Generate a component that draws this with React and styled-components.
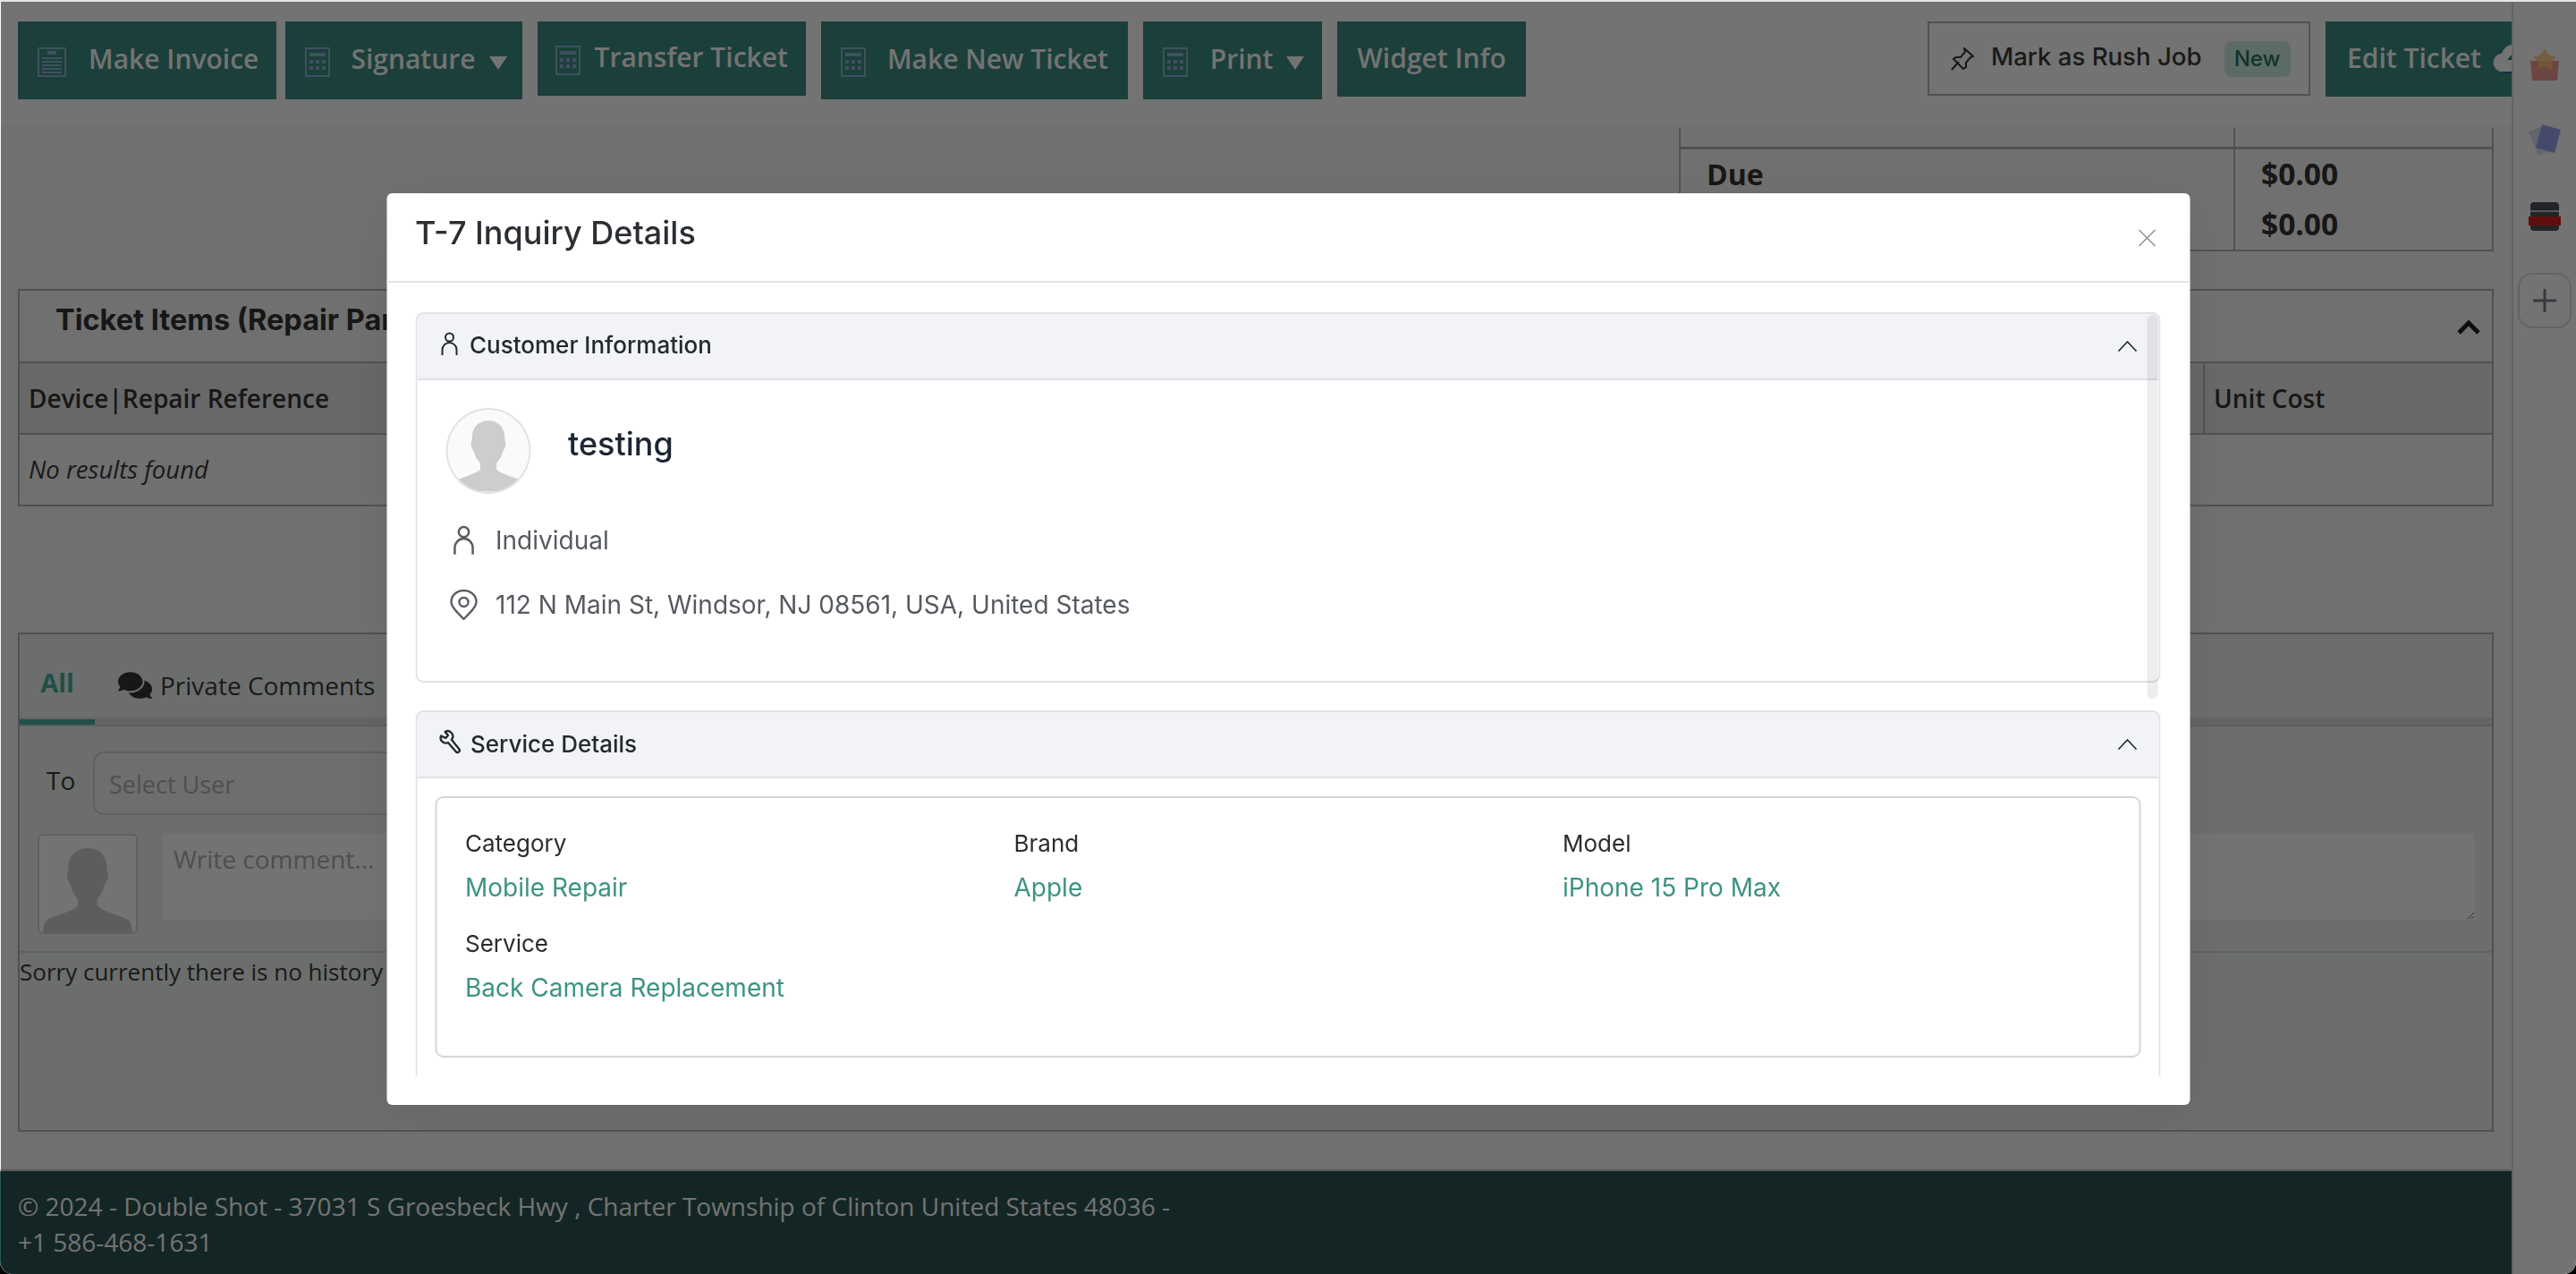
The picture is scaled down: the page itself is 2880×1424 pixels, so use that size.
import React from "react";
import styled, { createGlobalStyle } from "styled-components";
import { FaComments } from "react-icons/fa";

const Global = createGlobalStyle`
  html, body { margin: 0; padding: 0; background: #000; }
  body { font-family: "Open Sans", "Liberation Sans", sans-serif; color: #3a3a3a; }
  * { box-sizing: border-box; }
`;
const Shell = styled.div`
  display: grid; grid-template-columns: 2808px 72px; height: 1424px; overflow: hidden;
  background: #fff; border-top: 2px solid #e6e6e6; border-radius: 0 0 14px 14px;
`;
const Main = styled.div`display: flex; flex-direction: column; min-width: 0; height: 1422px;`;
const Toolbar = styled.div`
  display: flex; align-items: flex-start; gap: 17px; height: 139px; flex: none;
  padding: 22px 0 0 20px; overflow: hidden; background: #fff;
`;
const Group = styled.div`display: flex; align-items: flex-start; gap: 10px;`;
const ToolButton = styled.div`
  display: flex; align-items: center; flex: none;
  height: ${p => p.$h || 87}px; padding: ${p => p.$pad || "0 22px"};
  background: #3c8c82; color: #fff; font-weight: 600; font-size: 30px;
  white-space: nowrap;
`;
const ToolLabel = styled.span`margin-left: ${p => p.$ml || 0}px; margin-top: -4px;`;
const ToolIcon = styled.svg`flex: none; color: #8ab4d4; margin-top: 4px;`;
const Caret = styled.span`
  width: 0; height: 0; margin: 6px 0 0 15px;
  border-left: 10px solid transparent; border-right: 10px solid transparent; border-top: 15px solid #fff;
`;
const RushButton = styled.div`
  display: flex; align-items: center; flex: none; margin-left: auto; height: 83px; width: 428px;
  border: 2px solid #b4b4b4; padding: 0 0 0 24px; font-family: Inter, sans-serif; font-weight: 500;
  font-size: 27.6px; color: #3a3a3a; white-space: nowrap;
`;
const RushText = styled.span`margin-left: 19px; margin-top: -6px;`;
const NewBadge = styled.span`
  margin-left: 25px; width: 74px; height: 40px; border-radius: 8px; background: #cdeee0; color: #2f6f60;
  display: flex; align-items: center; justify-content: center; font-size: 24px; font-weight: 500;
`;
const EditButton = styled(ToolButton)`height: 84px; width: 300px; padding: 0 0 0 24px; margin-right: -92px;`;
const EditCloud = styled.svg`flex: none; margin-left: 12px;`;
const Content = styled.div`
  flex: 1; display: flex; flex-direction: column; padding: 2px 20px 0 20px; background: #f8f8f8; min-height: 0;
`;
const Totals = styled.div`
  align-self: flex-end; width: 911px; height: 138px; border: solid #b4b4b4; border-width: 0 2px 2px 2px;
  display: grid; grid-template-columns: 618px 1fr; grid-template-rows: 24px 1fr;
  font-weight: 700; font-size: 32px; color: #333;
`;
const TotalCell = styled.div`
  padding: ${p => p.$pad || "0"}; line-height: 55px;
  border-left: ${p => (p.$line ? "2px solid #b4b4b4" : "none")};
  border-bottom: ${p => (p.$head ? "3px solid #b4b4b4" : "none")};
`;
const Amounts = styled.div`font-size: 33.500px; line-height: 55.500px;`;
const ItemsCard = styled.div`margin-top: 42px; height: 243px; border: 2px solid #b4b4b4; display: flex; flex-direction: column;`;
const ItemsTitle = styled.div`
  height: 81px; flex: none; display: flex; align-items: center; justify-content: space-between; padding: 0 13px 14px 40px;
  font-family: Inter, sans-serif; font-weight: 700; font-size: 32.5px; color: #333; border-bottom: 2px solid #b4b4b4;
`;
const TitleChevron = styled.svg`flex: none; margin-top: 18px;`;
const ItemsHead = styled.div`
  height: 80px; flex: none; background: #e6e6e6; border-bottom: 2px solid #b4b4b4; display: flex; justify-content: space-between;
  font-weight: 600; font-size: 28px; color: #333;
`;
const HeadCell = styled.div`display: flex; align-items: center; padding: 0 10px;`;
const UnitCell = styled(HeadCell)`width: 323px; border-left: 2px solid #b4b4b4;`;
const NoResults = styled.div`flex: 1; display: flex; align-items: center; padding: 0 10px; font-style: italic; font-size: 27.5px; color: #3a3a3a;`;
const CommentCard = styled.div`
  margin-top: 141px; height: 559px; border: 2px solid #b4b4b4; background: #eef4f0; display: flex; flex-direction: column; font-size: 28px;
`;
const Tabs = styled.div`height: 101px; flex: none; border-bottom: 8px solid #dedede; box-shadow: 0 2px 0 #cfd2d0; display: flex; align-items: flex-end;`;
const TabAll = styled.div`
  width: 84px; height: 101px; margin-bottom: -8px; border-bottom: 6px solid #48b0a0; color: #48b0a0; font-weight: 700; font-size: 29px;
  display: flex; justify-content: center; padding-top: 34px;
`;
const TabOther = styled.div`display: flex; align-items: center; gap: 9px; margin: 0 0 17px 26px; color: #3a3a3a;`;
const ToRow = styled.div`display: flex; align-items: center; margin-top: 30px; padding-left: 30px;`;
const ToLabel = styled.div`width: 52px; margin-top: -6px;`;
const SelectBox = styled.div`
  width: 1100px; height: 71px; border: 2px solid #d2d2d2; border-radius: 12px; background: #f2f4f2;
  padding: 2px 0 0 16px; display: flex; align-items: center; color: #b0b0b0; font-size: 27px;
`;
const WriteRow = styled.div`display: flex; margin-top: 21px; padding: 0 19px 0 20px; gap: 28px; height: 133px; border-bottom: 2px solid #d6d9d7;`;
const SquareAvatar = styled.svg`flex: none; width: 112px; height: 112px; border: 2px solid #d4d4d4; border-radius: 6px; background: #fff;`;
const CommentInput = styled.textarea`
  flex: 1; height: 96px; border: 0; background: #fff; padding: 9px 12px; margin: 0; outline: none; resize: both;
  font-family: "Open Sans", sans-serif; font-size: 28px; color: #333; display: block;
  &::placeholder { color: #b0b0b0; opacity: 1; }
`;
const History = styled.div`padding: 2px 0 0 0; line-height: 38px; font-size: 26px;`;
const Spacer = styled.div`height: 42px; flex: none;`;
const Footer = styled.div`
  flex: none; margin-top: 0; height: 117px; background: #2b5452; border-top: 2px solid #c8c8c8; padding: 20px 20px 0;
  color: #fff; font-size: 28px; line-height: 39.5px;
`;
const Side = styled.div`
  display: flex; flex-direction: column; align-items: center; gap: 49px; padding-top: 52px;
  border-left: 2px solid #dedede; background: #fff; height: 1422px;
`;
const PlusBox = styled.div`
  margin-top: -4px; width: 60px; height: 62px; border: 2px solid #dcdcdc; border-radius: 16px;
  display: flex; align-items: center; justify-content: center;
`;

const Backdrop = styled.div`
  position: fixed; top: 2px; left: 1px; right: 0; bottom: 0; background: rgba(0,0,0,.55);
  border-radius: 0 0 14px 14px;
`;
const Modal = styled.div`
  width: 2016px; height: 1019px; margin: 214px auto 0; transform: translateX(-0.5px); background: #fff; border-radius: 6px;
  font-family: Inter, "Liberation Sans", sans-serif; box-shadow: 0 10px 60px rgba(0,0,0,.08);
`;
const ModalHead = styled.div`
  height: 100px; border-bottom: 2px solid #e2e4ea; display: flex; align-items: flex-start; justify-content: space-between;
  padding: 20px 38px 0 32px;
`;
const ModalTitle = styled.div`font-size: 36px; font-weight: 500; line-height: 48px; color: #2b2f33;`;
const CloseBtn = styled.svg`margin-top: 20px; color: #8f8f95;`;
const ModalBody = styled.div`padding: 33px 33px 32px 32px;`;
const Scroller = styled.div`position: relative; height: 854px; overflow: hidden; display: flex; flex-direction: column; gap: 31px;`;
const Accordion = styled.div`flex: none; border: 2px solid #e0e2e8; border-radius: 9px; overflow: hidden;`;
const AccHead = styled.div`
  height: 74px; background: #f2f3f6; border-bottom: 2px solid #e0e2e8; display: flex; align-items: center;
  padding: 0 24px 0 26px; font-size: 26px; font-weight: 500; color: #25292d;
`;
const AccIcon = styled.svg`flex: none; margin: -6px ${p => p.$mr}px 0 ${p => p.$ml || 0}px; color: #25292d;`;
const AccTitle = styled.span`flex: 1; margin-top: ${p => p.$mt || -2}px;`;
const CustomerBody = styled.div`padding: 31px 32px 69px;`;
const NameRow = styled.div`display: flex; align-items: flex-start; gap: 42px;`;
const RoundAvatar = styled.svg`flex: none; width: 95px; height: 96px; border-radius: 50%; border: 2px solid #e2e2e2; background: #fafafa;`;
const CustomerName = styled.div`margin-top: 17px; font-size: 36px; font-weight: 500; line-height: 46px; color: #1c2533;`;
const InfoRow = styled.div`display: flex; align-items: center; height: 32px; margin-top: ${p => p.$mt}px; color: #565a60; font-size: 28px;`;
const InfoIcon = styled.svg`flex: none; width: 40px; margin-right: 16px; color: #5a5d63;`;
const ServiceBody = styled.div`padding: 20px 20px 40px;`;
const ServiceCard = styled.div`
  border: 2px solid #d4d6dc; border-radius: 9px; padding: 33px 33px 58px 32px;
  display: grid; grid-template-columns: repeat(3, 613.5px); row-gap: 27px;
`;
const FieldLabel = styled.div`font-size: 26px; line-height: 36px; color: #2c2c2c;`;
const FieldValue = styled.div`margin-top: 13px; font-size: 28px; line-height: 36px; color: #3d9384;`;
const Scrollbar = styled.div`
  position: absolute; top: 3px; right: 3px; width: 12px; height: 429px; border-radius: 6px; background: rgba(0,0,0,.07);
`;

const Chevron = ({ size = 22 }) => (
  <svg width={size} height={12} viewBox="0 0 22 12" fill="none" stroke="#25292d" strokeWidth="1.6"><path d="M1 11.5 11 1l10 10.5" /></svg>
);
const Calc = ({ w = 28 }) => (
  <ToolIcon width={w} height={33} viewBox="0 0 28 33" fill="none">
    <rect x="1" y="1" width="26" height="31" stroke="currentColor" strokeWidth="2" />
    <rect x="5" y="6" width="18" height="4" fill="currentColor" />
    {[14, 21].map(y => [5, 12, 19].map(x => <rect key={x + "-" + y} x={x} y={y} width="4" height="4" fill="currentColor" />))}
  </ToolIcon>
);
const Doc = () => (
  <ToolIcon width={32} height={33} viewBox="0 0 32 33" fill="none">
    <rect x="1" y="1" width="30" height="31" stroke="currentColor" strokeWidth="2" />
    <rect x="11" y="4" width="10" height="4" fill="currentColor" />
    {[11, 15, 19, 23, 27].map(y => <rect key={y} x="5" y={y} width="22" height="2" fill="currentColor" />)}
  </ToolIcon>
);
const Silhouette = ({ fill }) => (
  <path fill={fill} d="M50 13c14 0 21 10 20 24 2 1 2 9-2 13-2 8-5 12-8 15v8c6 5 20 9 30 13 4 2 6 6 6 14H4c0-8 2-12 6-14 10-4 24-8 30-13v-8c-3-3-6-7-8-15-4-4-4-12-2-13-1-14 6-24 20-24z" />
);
const PersonPath = () => (
  <>
    <circle cx="10" cy="6" r="4.5" />
    <path d="M2 26v-6a8 8 0 0 1 16 0v6" />
  </>
);

export default function App() {
  return (
    <>
      <Global />
      <Shell>
        <Main>
          <Toolbar>
            <Group>
              <ToolButton $pad="0 20px 0 22px"><Doc /><ToolLabel $ml={25}>Make Invoice</ToolLabel></ToolButton>
              <ToolButton $pad="0 17px 0 22px"><Calc /><ToolLabel $ml={23}>Signature</ToolLabel><Caret /></ToolButton>
            </Group>
            <ToolButton $h={83} $pad="0 20px"><Calc /><ToolLabel $ml={16}>Transfer Ticket</ToolLabel></ToolButton>
            <ToolButton><Calc /><ToolLabel $ml={24}>Make New Ticket</ToolLabel></ToolButton>
            <ToolButton $pad="0 20px 0 22px"><Calc /><ToolLabel $ml={25}>Print</ToolLabel><Caret /></ToolButton>
            <ToolButton $h={84}><ToolLabel>Widget Info</ToolLabel></ToolButton>
            <RushButton>
              <svg width="26" height="26" viewBox="0 0 26 26" fill="none" stroke="#333" strokeWidth="2"><path d="M1 25 9 16M15 1l10 9-3 1-5 6 0 5-3 2-11-11 3-2 5 0 5-6z" /></svg>
              <RushText>Mark as Rush Job</RushText>
              <NewBadge>New</NewBadge>
            </RushButton>
            <EditButton>
              <ToolLabel>Edit Ticket</ToolLabel>
              <EditCloud width="50" height="36" viewBox="0 0 50 36"><path fill="#fff" d="M12 32a10 10 0 0 1-1-20 15 15 0 0 1 28-2 11 11 0 0 1 1 22z" /><path fill="#2b6f78" d="M25 10l8 9h-5v9h-6v-9h-5z" /><path stroke="#3a5fa0" strokeWidth="2" d="M12 33h28" /></EditCloud>
            </EditButton>
          </Toolbar>
          <Content>
            <Totals>
              <TotalCell $head />
              <TotalCell $head $line />
              <TotalCell $pad="0 0 0 29px">Due</TotalCell>
              <TotalCell $line $pad="0 0 0 29px"><Amounts>$0.00<br />$0.00</Amounts></TotalCell>
            </Totals>
            <ItemsCard>
              <ItemsTitle>
                <span>Ticket Items (Repair Parts)</span>
                <TitleChevron width="26" height="16" viewBox="0 0 26 16" fill="none" stroke="#222" strokeWidth="5"><path d="M2 14 13 3l11 11" /></TitleChevron>
              </ItemsTitle>
              <ItemsHead>
                <HeadCell>Device|Repair Reference</HeadCell>
                <UnitCell>Unit Cost</UnitCell>
              </ItemsHead>
              <NoResults>No results found</NoResults>
            </ItemsCard>
            <CommentCard>
              <Tabs>
                <TabAll>All</TabAll>
                <TabOther><FaComments size={38} color="#333" />Private Comments</TabOther>
              </Tabs>
              <ToRow><ToLabel>To</ToLabel><SelectBox>Select User</SelectBox></ToRow>
              <WriteRow>
                <SquareAvatar viewBox="0 0 100 100"><Silhouette fill="#cfcfcf" /></SquareAvatar>
                <CommentInput placeholder="Write comment..." />
              </WriteRow>
              <History>Sorry currently there is no history</History>
            </CommentCard>
            <Spacer />
          </Content>
          <Footer>
            © 2024 - Double Shot - 37031 S Groesbeck Hwy , Charter Township of Clinton United States 48036 -<br />
            +1 586-468-1631
          </Footer>
        </Main>
        <Side>
          <svg width="38" height="36" viewBox="0 0 38 36"><path fill="#f08f88" d="M3 14h32l-2 22H5z" opacity=".9" /><path fill="#ffc870" d="M19 0l4.5 7.5 8.500 2-6 6 1 8-8-3.5-8 3.5 1-8-6-6 8.500-2z" opacity=".8" /></svg>
          <svg width="38" height="36" viewBox="0 0 38 36"><path fill="#cdd2f2" d="M1 8 20 1l12 26-20 8z" opacity=".75" /><path fill="#9aa2f0" d="M16 0l21 6-7 26-21-6z" /></svg>
          <svg width="38" height="36" viewBox="0 0 38 36"><rect x="3" y="2" width="32" height="32" rx="4" fill="#4c5059" /><rect x="3" y="11" width="32" height="2" fill="#bcbcbc" /><rect x="1" y="18" width="36" height="10" fill="#da1e1e" /></svg>
          <PlusBox>
            <svg width="28" height="28" viewBox="0 0 28 28" stroke="#7a8090" strokeWidth="3"><path d="M14 1v26M1 14h26" /></svg>
          </PlusBox>
        </Side>
      </Shell>
      <Backdrop>
        <Modal>
          <ModalHead>
            <ModalTitle>T-7 Inquiry Details</ModalTitle>
            <CloseBtn width="20" height="20" viewBox="0 0 20 20" stroke="currentColor" strokeWidth="1.5"><path d="M1 1l18 18M19 1 1 19" /></CloseBtn>
          </ModalHead>
          <ModalBody>
            <Scroller>
              <Accordion>
                <AccHead>
                  <AccIcon $mr={13} width="20" height="27" viewBox="0 0 20 27" fill="none" stroke="currentColor" strokeWidth="2"><PersonPath /></AccIcon>
                  <AccTitle $mt={-4}>Customer Information</AccTitle>
                  <Chevron />
                </AccHead>
                <CustomerBody>
                  <NameRow>
                    <RoundAvatar viewBox="0 0 100 100"><Silhouette fill="#cdcdcd" /></RoundAvatar>
                    <CustomerName>testing</CustomerName>
                  </NameRow>
                  <InfoRow $mt={36}>
                    <InfoIcon height="34" viewBox="0 0 20 27" fill="none" stroke="currentColor" strokeWidth="2"><PersonPath /></InfoIcon>
                    Individual
                  </InfoRow>
                  <InfoRow $mt={40}>
                    <InfoIcon height="34" viewBox="0 0 32 34" fill="none" stroke="currentColor" strokeWidth="2.4"><path d="M16 33C8 25 2 19 2 13.500a14 12.500 0 0 1 28 0C30 19 24 25 16 33z" /><circle cx="16" cy="14" r="5" /></InfoIcon>
                    112 N Main St, Windsor, NJ 08561, USA, United States
                  </InfoRow>
                </CustomerBody>
              </Accordion>
              <Accordion>
                <AccHead>
                  <AccIcon $mr={9} $ml={-3} width="28" height="28" viewBox="0 0 24 24" fill="none" stroke="currentColor" strokeWidth="2" strokeLinecap="round" strokeLinejoin="round"><path d="M3 6.500a5 5 0 0 0 6.800 6.300l7.400 8.700a2 2 0 0 0 3.200-2.500l-7.200-8.900A5 5 0 0 0 7 2.500L9.800 6 7.500 8.500 3 6.500z" /></AccIcon>
                  <AccTitle>Service Details</AccTitle>
                  <Chevron />
                </AccHead>
                <ServiceBody>
                  <ServiceCard>
                    <div><FieldLabel>Category</FieldLabel><FieldValue>Mobile Repair</FieldValue></div>
                    <div><FieldLabel>Brand</FieldLabel><FieldValue>Apple</FieldValue></div>
                    <div><FieldLabel>Model</FieldLabel><FieldValue>iPhone 15 Pro Max</FieldValue></div>
                    <div><FieldLabel>Service</FieldLabel><FieldValue>Back Camera Replacement</FieldValue></div>
                  </ServiceCard>
                </ServiceBody>
              </Accordion>
              <Scrollbar />
            </Scroller>
          </ModalBody>
        </Modal>
      </Backdrop>
    </>
  );
}
